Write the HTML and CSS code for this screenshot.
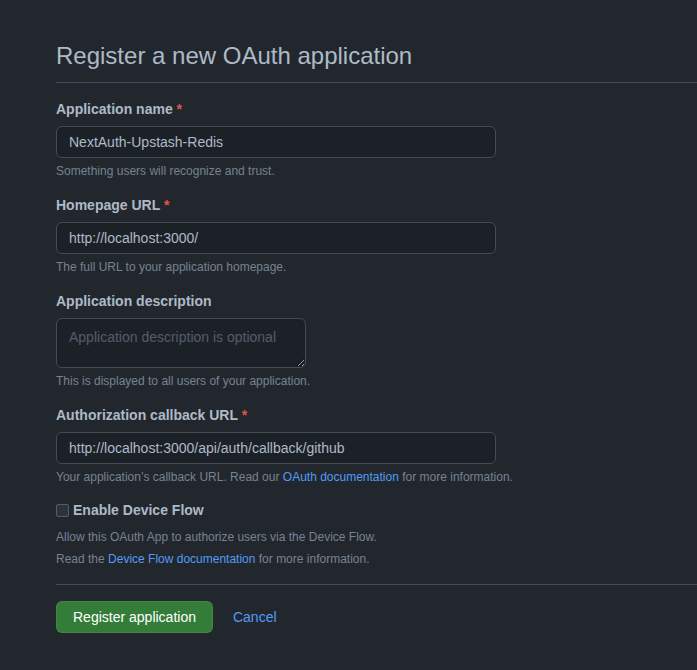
FILE: index.html
```html
<!DOCTYPE html>
<html lang="en">
<head>
<meta charset="utf-8">
<title>Register a new OAuth application</title>
<link rel="stylesheet" href="styles.css">
</head>
<body>
<main class="page">
  <div class="subhead">
    <h1 class="subhead-heading">Register a new OAuth application</h1>
  </div>
  <form class="form">
    <div class="form-group">
      <label class="label" for="name">Application name <span class="req">*</span></label>
      <input class="input input-wide" id="name" type="text" value="NextAuth-Upstash-Redis">
      <p class="note">Something users will recognize and trust.</p>
    </div>
    <div class="form-group">
      <label class="label" for="home">Homepage URL <span class="req">*</span></label>
      <input class="input input-wide" id="home" type="text" value="http://localhost:3000/">
      <p class="note">The full URL to your application homepage.</p>
    </div>
    <div class="form-group">
      <label class="label" for="desc">Application description</label>
      <textarea class="input textarea" id="desc" placeholder="Application description is optional"></textarea>
      <p class="note">This is displayed to all users of your application.</p>
    </div>
    <div class="form-group">
      <label class="label" for="cb">Authorization callback URL <span class="req">*</span></label>
      <input class="input input-wide" id="cb" type="text" value="http://localhost:3000/api/auth/callback/github">
      <p class="note">Your application’s callback URL. Read our <a class="link" href="#">OAuth documentation</a> for more information.</p>
    </div>
    <div class="form-group check-group">
      <label class="check-label"><input class="checkbox" type="checkbox"> Enable Device Flow</label>
      <p class="note check-note">Allow this OAuth App to authorize users via the Device Flow.</p>
      <p class="note check-note">Read the <a class="link" href="#">Device Flow documentation</a> for more information.</p>
    </div>
    <hr class="rule">
    <div class="actions">
      <button class="btn-primary" type="button">Register application</button>
      <a class="link cancel" href="#">Cancel</a>
    </div>
  </form>
</main>
</body>
</html>
```
FILE: styles.css
```css
html, body {
  margin: 0;
  padding: 0;
  background: #22272e;
}
body {
  font-family: "Liberation Sans", Arial, sans-serif;
  color: #adbac7;
  font-size: 14px;
  line-height: 1.5;
}
.page {
  padding: 38px 0 0 56px;
}
.subhead {
  border-bottom: 1px solid #444c56;
  padding-bottom: 8px;
  margin-bottom: 16px;
}
.subhead-heading {
  margin: 0;
  font-size: 24px;
  font-weight: 400;
  line-height: 36px;
  color: #adbac7;
}
.form-group {
  margin: 0 0 15px;
}
.label {
  display: block;
  font-weight: 700;
  font-size: 14px;
  line-height: 21px;
  margin-bottom: 6px;
}
.req {
  color: #e5534b;
}
.input {
  display: block;
  box-sizing: border-box;
  font-family: inherit;
  font-size: 14px;
  line-height: 20px;
  color: #adbac7;
  background: #1c2128;
  border: 1px solid #444c56;
  border-radius: 6px;
  padding: 5px 12px;
  outline: none;
  margin: 0;
}
.input-wide {
  width: 440px;
  height: 32px;
}
.textarea {
  width: 250px;
  height: 50px;
  padding-top: 8px;
  resize: vertical;
}
.textarea::placeholder {
  color: #545d68;
}
.note {
  margin: 4px 0 0;
  font-size: 12px;
  line-height: 18px;
  color: #768390;
}
.link {
  color: #539bf5;
  text-decoration: none;
}
.check-label {
  display: flex;
  align-items: center;
  font-weight: 700;
  font-size: 14px;
  line-height: 21px;
  margin-top: -1px;
}
.checkbox {
  appearance: none;
  -webkit-appearance: none;
  width: 13px;
  height: 13px;
  margin: 0 4px 0 0;
  border: 1px solid #545d68;
  border-radius: 2px;
  background: #2d333b;
  box-sizing: border-box;
}
.check-note {
  margin-top: 4px;
}
.check-label + .check-note {
  margin-top: 7px;
}
.rule {
  border: 0;
  border-top: 1px solid #444c56;
  margin: 16px 0 16px;
  height: 0;
}
.actions {
  display: flex;
  align-items: center;
  gap: 20px;
}
.btn-primary {
  font-family: inherit;
  font-size: 14px;
  line-height: 20px;
  height: 32px;
  padding: 5px 16px;
  color: #ffffff;
  background: #347d39;
  border: 1px solid rgba(205, 217, 229, 0.1);
  border-radius: 6px;
  cursor: pointer;
}
.cancel {
  font-size: 14px;
}
```
